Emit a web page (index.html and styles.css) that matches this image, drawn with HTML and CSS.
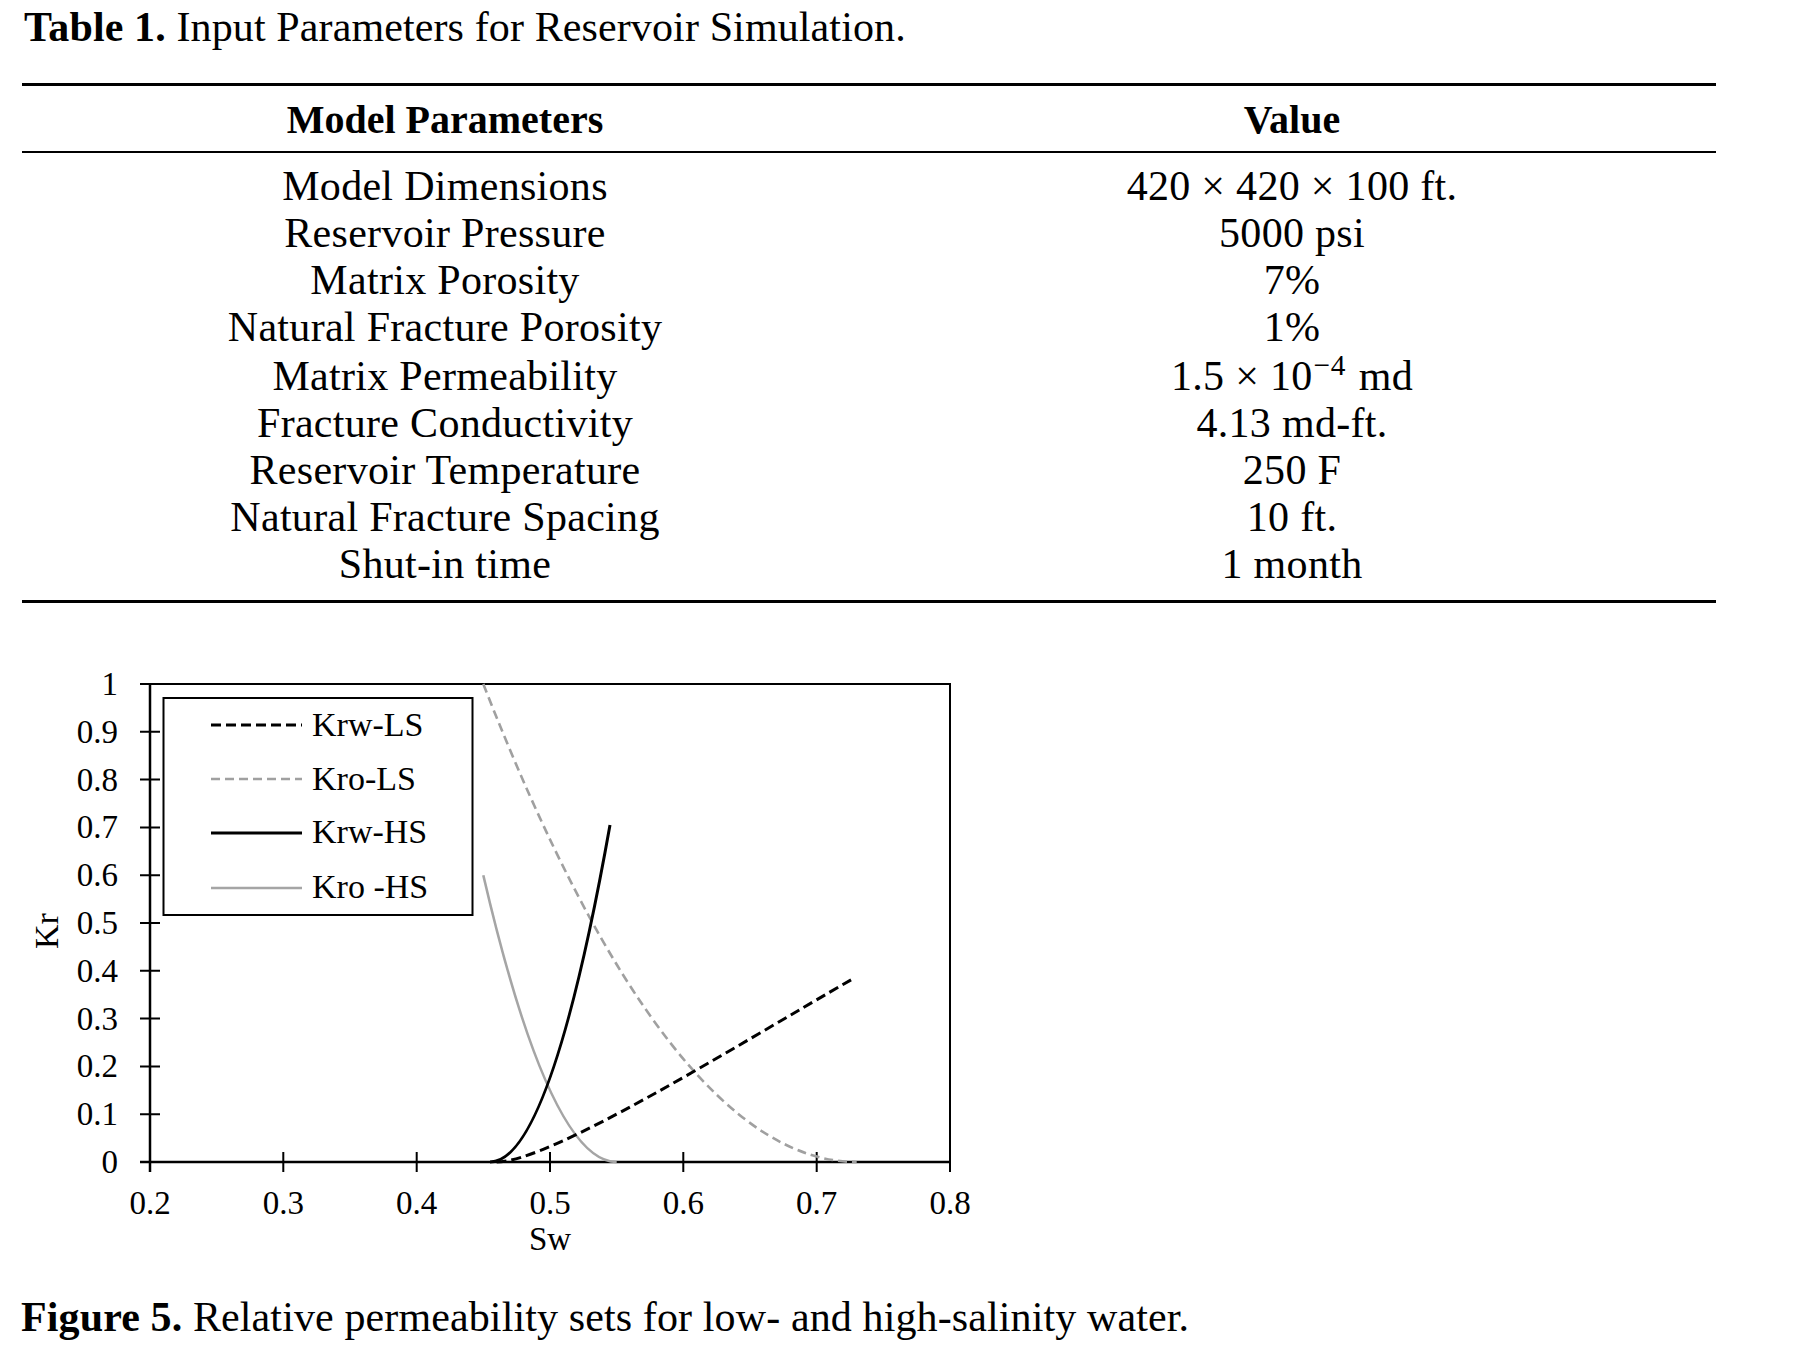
FILE: index.html
```html
<!DOCTYPE html>
<html lang="en">
<head>
<meta charset="utf-8">
<title>Table 1 and Figure 5</title>
<link rel="stylesheet" href="styles.css">
</head>
<body>
<p class="caption title"><b>Table 1.</b> Input Parameters for Reservoir Simulation.</p>

<div class="tbl">
  <div class="thead">
    <div class="row head"><span>Model Parameters</span><span>Value</span></div>
  </div>
  <div class="tbody">
    <div class="row"><span>Model Dimensions</span><span>420 × 420 × 100 ft.</span></div>
    <div class="row"><span>Reservoir Pressure</span><span>5000 psi</span></div>
    <div class="row"><span>Matrix Porosity</span><span>7%</span></div>
    <div class="row"><span>Natural Fracture Porosity</span><span>1%</span></div>
    <div class="row tall"><span>Matrix Permeability</span><span>1.5 × 10<sup>−4</sup> md</span></div>
    <div class="row"><span>Fracture Conductivity</span><span>4.13 md-ft.</span></div>
    <div class="row"><span>Reservoir Temperature</span><span>250 F</span></div>
    <div class="row"><span>Natural Fracture Spacing</span><span>10 ft.</span></div>
    <div class="row"><span>Shut-in time</span><span>1 month</span></div>
  </div>
</div>

<svg class="chart" width="1000" height="650" viewBox="0 620 1000 650" xmlns="http://www.w3.org/2000/svg">
  <!-- frame and axes -->
  <path class="frame" d="M140 684 H950 V1172"/>
  <path class="axis" d="M150 684 V1172 M140 1162 H950"/>
  <path class="ticks" d="M140 1114.2h20 M140 1066.4h20 M140 1018.6h20 M140 970.8h20 M140 923h20 M140 875.2h20 M140 827.4h20 M140 779.6h20 M140 731.8h20 M283.3 1152v20 M416.7 1152v20 M550 1152v20 M683.3 1152v20 M816.7 1152v20"/>

  <!-- y tick labels -->
  <g class="ylab">
    <text x="118" y="1173">0</text>
    <text x="118" y="1125.2">0.1</text>
    <text x="118" y="1077.4">0.2</text>
    <text x="118" y="1029.6">0.3</text>
    <text x="118" y="981.8">0.4</text>
    <text x="118" y="934">0.5</text>
    <text x="118" y="886.2">0.6</text>
    <text x="118" y="838.4">0.7</text>
    <text x="118" y="790.6">0.8</text>
    <text x="118" y="742.8">0.9</text>
    <text x="118" y="695">1</text>
  </g>
  <!-- x tick labels -->
  <g class="xlab">
    <text x="150" y="1214">0.2</text>
    <text x="283.3" y="1214">0.3</text>
    <text x="416.7" y="1214">0.4</text>
    <text x="550" y="1214">0.5</text>
    <text x="683.3" y="1214">0.6</text>
    <text x="816.7" y="1214">0.7</text>
    <text x="950" y="1214">0.8</text>
    <text x="550" y="1250">Sw</text>
  </g>
  <text class="ytitle" transform="translate(58 931) rotate(-90)">Kr</text>

  <!-- data curves -->
  <path class="c-kro-hs" d="M483.3 875.2 Q550 1162 616.7 1162"/>
  <path class="c-kro-ls" d="M483.3 684 Q670 1162 856.7 1162"/>
  <path class="c-krw-ls" d="M496.7 1162 C550 1162 732.7 1047.8 852.7 978.9"/>
  <path class="c-krw-hs" d="M490 1162 Q550 1162 610 825"/>

  <!-- legend -->
  <rect class="legend-box" x="163.5" y="698" width="309" height="217"/>
  <line class="c-krw-ls" x1="211" y1="725" x2="302" y2="725"/>
  <line class="c-kro-ls" x1="211" y1="779" x2="302" y2="779"/>
  <line class="c-krw-hs" x1="211" y1="833" x2="302" y2="833"/>
  <line class="c-kro-hs" x1="211" y1="888" x2="302" y2="888"/>
  <g class="leg">
    <text x="312" y="736">Krw-LS</text>
    <text x="312" y="790">Kro-LS</text>
    <text x="312" y="843">Krw-HS</text>
    <text x="312" y="898">Kro -HS</text>
  </g>
</svg>

<p class="caption fig"><b>Figure 5.</b> Relative permeability sets for low- and high-salinity water.</p>
</body>
</html>
```

FILE: styles.css
```css
html, body {
  margin: 0;
  padding: 0;
  background: #fff;
  color: #000;
}

body {
  width: 1800px;
  font-family: "Liberation Serif", "Times New Roman", serif;
}

.caption {
  margin: 0;
  font-size: 42px;
  line-height: 47px;
  letter-spacing: 0.12px;
  white-space: nowrap;
}

.caption b {
  font-weight: bold;
}

.title {
  margin-top: 4px;
  padding-left: 24px;
}

.fig {
  margin-top: 24px;
  padding-left: 21px;
}

.tbl {
  width: 1694px;
  margin: 32px 0 0 22px;
  border-top: 3px solid #000;
  border-bottom: 3px solid #000;
}

.thead {
  padding: 10px 0 8px;
  border-bottom: 2px solid #000;
}

.tbody {
  padding: 10px 0 12px;
}

.row {
  display: grid;
  grid-template-columns: 846px 848px;
  text-align: center;
  font-size: 42px;
  line-height: 47px;
  letter-spacing: 0.3px;
  white-space: nowrap;
}

.row.head {
  font-size: 40px;
  font-weight: bold;
  letter-spacing: 0;
}

.row.tall {
  padding-top: 2px;
}

.row sup {
  font-size: 0.7em;
  vertical-align: baseline;
  position: relative;
  top: -0.5em;
  line-height: 0;
  letter-spacing: 0.5px;
  margin-left: 1px;
  margin-right: 2px;
}

.chart {
  display: block;
  margin-top: 17px;
}

.frame {
  fill: none;
  stroke: #000;
  stroke-width: 2;
}

.axis {
  fill: none;
  stroke: #000;
  stroke-width: 2.5;
}

.ticks {
  fill: none;
  stroke: #000;
  stroke-width: 2;
}

.ylab text,
.xlab text,
.ytitle,
.leg text {
  font-family: "Liberation Serif", "Times New Roman", serif;
  fill: #000;
}

.ylab text {
  font-size: 33px;
  text-anchor: end;
}

.xlab text {
  font-size: 33px;
  text-anchor: middle;
}

.ytitle {
  font-size: 34px;
  text-anchor: middle;
}

.leg text {
  font-size: 34px;
}

.legend-box {
  fill: #fff;
  stroke: #000;
  stroke-width: 2;
}

.c-krw-ls {
  fill: none;
  stroke: #000;
  stroke-width: 3;
  stroke-dasharray: 10 5;
}

.c-kro-ls {
  fill: none;
  stroke: #a0a0a0;
  stroke-width: 2.6;
  stroke-dasharray: 9 5;
}

.c-krw-hs {
  fill: none;
  stroke: #000;
  stroke-width: 3;
}

.c-kro-hs {
  fill: none;
  stroke: #a5a5a5;
  stroke-width: 2.6;
}
```
